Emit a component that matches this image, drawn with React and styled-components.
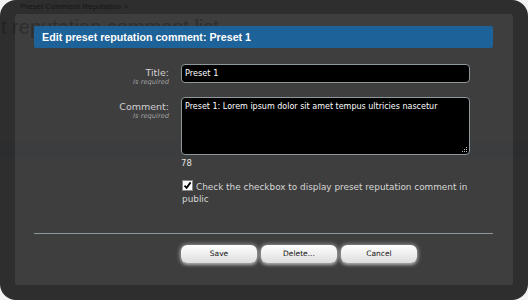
import React from "react";
import styled, { createGlobalStyle } from "styled-components";

const Global = createGlobalStyle`
  html, body { margin: 0; padding: 0; }
  body {
    width: 528px; height: 300px; overflow: hidden;
    background: #d9d9d9;
    font-family: "DejaVu Sans", Verdana, sans-serif;
  }
`;

const Page = styled.div`
  position: relative;
  width: 528px;
  height: 300px;
  background: #f2f2f2;
  overflow: hidden;
`;

const Breadcrumb = styled.div`
  padding: 1px 0 0 20px;
  height: 13px;
  font-size: 8px;
  line-height: 11px;
  color: #777;
  font-family: "Liberation Sans", Arial, sans-serif;
`;

const PageTitle = styled.h1`
  margin: 0;
  padding: 0 0 0 1px;
  font-family: "Liberation Sans", Arial, sans-serif;
  font-weight: normal;
  font-size: 20px;
  line-height: 26px;
  color: #b4b4b4;
  white-space: nowrap;
`;

const PageBand = styled.div`
  margin-top: 101px;
  height: 16px;
  background: #e6eef6;
`;

const Overlay = styled.div`
  position: absolute;
  top: 0;
  left: 0;
  width: 528px;
  height: 300px;
  z-index: 1;
  box-sizing: border-box;
  border: 14px solid rgba(0, 0, 0, 0.81);
  border-left-width: 15px;
  border-right-width: 15px;
  border-bottom-width: 15px;
  border-radius: 16px;
  background-clip: padding-box;
`;

const Content = styled.div`
  height: 100%;
  background: rgba(0, 0, 0, 0.745);
  padding: 12px 20px 0 19px;
  box-sizing: border-box;
`;

const Heading = styled.h2`
  margin: 0;
  height: 22px;
  background: #1d6298;
  color: #fff;
  font-family: "Liberation Sans", Arial, sans-serif;
  font-weight: bold;
  font-size: 10.7px;
  line-height: 22px;
  padding-left: 8px;
  border-radius: 2px;
`;

const Form = styled.div`
  display: grid;
  grid-template-columns: 135px 289px;
  column-gap: 12px;
  margin-top: 16px;
`;

const Label = styled.div`
  text-align: right;
  color: #d0d0d0;
  font-size: 9.5px;
  line-height: 11px;
  padding-top: ${(p) => p.$top || 4}px;
`;

const Hint = styled.div`
  font-size: 6.7px;
  font-style: italic;
  color: #a0a0a0;
  line-height: 8px;
`;

const Field = styled.div`
  display: flex;
  flex-direction: column;
  margin-bottom: ${(p) => p.$mb || 0}px;
`;

const TextInput = styled.div`
  box-sizing: border-box;
  height: 19px;
  background: #000;
  border: 1px solid #8e989d;
  border-radius: 4px;
  color: #fff;
  font-size: 8.2px;
  line-height: 17px;
  padding-left: 3px;
`;

const TextArea = styled.div`
  position: relative;
  box-sizing: border-box;
  height: 58px;
  background: #000;
  border: 1px solid #8e989d;
  border-radius: 4px;
  color: #fff;
  font-size: 8px;
  line-height: 12px;
  padding: 3px 3px;
`;

const Grip = styled.svg`
  position: absolute;
  right: 1px;
  bottom: 1px;
`;

const Counter = styled.div`
  color: #e0e0e0;
  font-size: 8.5px;
  margin-top: 2px;
  line-height: 12px;
`;

const CheckRow = styled.div`
  grid-column: 2;
  margin-top: 11px;
  color: #d6d6d6;
  font-size: 8.9px;
  line-height: 12px;
  padding-left: 1px;
`;

const Box = styled.span`
  display: inline-block;
  vertical-align: -1px;
  width: 9px;
  height: 9px;
  background: #fff;
  border: 1px solid #888;
  margin-right: 3px;
  position: relative;
`;

const Separator = styled.hr`
  margin: 28px 0 0 0;
  border: 0;
  height: 1px;
  background: #8c979c;
`;

const Buttons = styled.div`
  display: flex;
  gap: 4px;
  margin: 11px 0 0 147px;
`;

const Button = styled.button`
  width: 76px;
  height: 18px;
  padding: 0;
  border: 0;
  border-radius: 6px;
  background: linear-gradient(#ffffff, #ebebeb 60%, #dcdcdc);
  box-shadow: 0 0 4px 1px rgba(255, 255, 255, 0.45), 0 2px 3px rgba(255, 255, 255, 0.35);
  color: #111;
  font-family: "DejaVu Sans", Verdana, sans-serif;
  font-size: 7.5px;
  line-height: 18px;
`;

export default function App() {
  return (
    <>
      <Global />
      <Page>
        <Breadcrumb>Preset Comment Reputation &gt;</Breadcrumb>
        <PageTitle>t reputation comment list</PageTitle>
        <PageBand />
        <Overlay>
          <Content>
            <Heading>Edit preset reputation comment: Preset 1</Heading>
            <Form>
              <Label $top={3}>
                Title:
                <Hint>Is required</Hint>
              </Label>
              <Field $mb={14}>
                <TextInput>Preset 1</TextInput>
              </Field>
              <Label $top={4}>
                Comment:
                <Hint>Is required</Hint>
              </Label>
              <Field>
                <TextArea>
                  Preset 1: Lorem ipsum dolor sit amet tempus ultricies nascetur
                  <Grip width="7" height="7" viewBox="0 0 7 7">
                    <rect x="5" y="1" width="1" height="1" fill="#bbb" />
                    <rect x="3" y="3" width="1" height="1" fill="#bbb" />
                    <rect x="5" y="3" width="1" height="1" fill="#bbb" />
                    <rect x="1" y="5" width="1" height="1" fill="#bbb" />
                    <rect x="3" y="5" width="1" height="1" fill="#bbb" />
                    <rect x="5" y="5" width="1" height="1" fill="#bbb" />
                  </Grip>
                </TextArea>
                <Counter>78</Counter>
              </Field>
              <CheckRow>
                <Box>
                  <svg width="9" height="9" viewBox="0 0 9 9" style={{ position: "absolute", left: 0, top: 0 }}>
                    <path d="M1.5 4.6 L3.6 6.8 L7.6 1.4" stroke="#000" strokeWidth="1.8" fill="none" />
                  </svg>
                </Box>
                Check the checkbox to display preset reputation comment in public
              </CheckRow>
            </Form>
            <Separator />
            <Buttons>
              <Button>Save</Button>
              <Button>Delete...</Button>
              <Button>Cancel</Button>
            </Buttons>
          </Content>
        </Overlay>
      </Page>
    </>
  );
}
